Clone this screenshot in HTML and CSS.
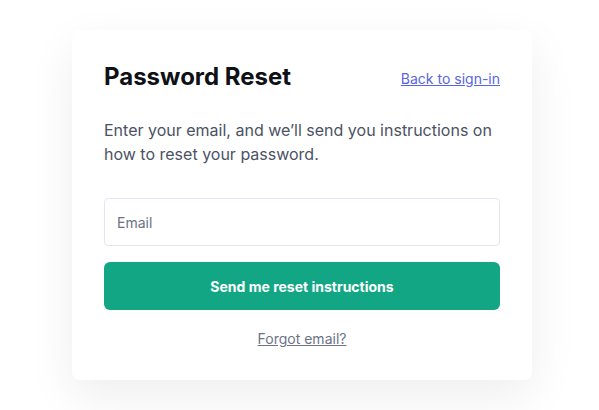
FILE: index.html
```html
<!DOCTYPE html>
<html lang="en">
<head>
<meta charset="utf-8">
<title>Password Reset</title>
<link rel="stylesheet" href="styles.css">
</head>
<body>
  <main class="card">
    <div class="header">
      <h1 class="title">Password Reset</h1>
      <a class="back" href="#">Back to sign-in</a>
    </div>
    <p class="desc">Enter your email, and we’ll send you instructions on how to reset your password.</p>
    <form class="form">
      <input class="input" type="email" placeholder="Email">
      <button class="btn" type="button">Send me reset instructions</button>
    </form>
    <div class="forgot-row"><a class="forgot" href="#">Forgot email?</a></div>
  </main>
</body>
</html>
```

FILE: styles.css
```css
* { box-sizing: border-box; }
html, body { margin: 0; background: #ffffff; }
body {
  font-family: Inter, "Noto Sans", sans-serif;
  padding: 30px 67px 30px 72px;
}
.card {
  width: 460px;
  height: 350px;
  background: #fff;
  border-radius: 8px;
  box-shadow: 0 16px 48px rgba(0, 0, 0, 0.07);
  padding: 32px;
}
.header {
  display: flex;
  justify-content: space-between;
  align-items: center;
  margin-top: -1px;
}
.title {
  margin: 0;
  font-size: 24px;
  line-height: 32px;
  font-weight: 700;
  color: #0f1117;
}
.back {
  font-size: 14px;
  margin-top: 2px;
  color: #5865e0;
  text-decoration: underline;
}
.desc {
  margin: 25px 0 0;
  font-size: 16px;
  line-height: 24px;
  color: #4b5264;
}
.form {
  margin-top: 32px;
  display: flex;
  flex-direction: column;
  gap: 16px;
}
.input {
  height: 48px;
  border: 1px solid #e5e5f2;
  border-radius: 4px;
  padding: 0 12px;
  font-family: inherit;
  font-size: 14px;
  color: #111;
}
.input::placeholder { color: #6b7385; }
.btn {
  height: 48px;
  border: none;
  border-radius: 6px;
  background: #12a684;
  color: #fff;
  font-family: inherit;
  font-size: 14px;
  font-weight: 700;
}
.forgot-row {
  margin-top: 18px;
  text-align: center;
}
.forgot {
  font-size: 14px;
  color: #6b7385;
  text-decoration: underline;
}
```
